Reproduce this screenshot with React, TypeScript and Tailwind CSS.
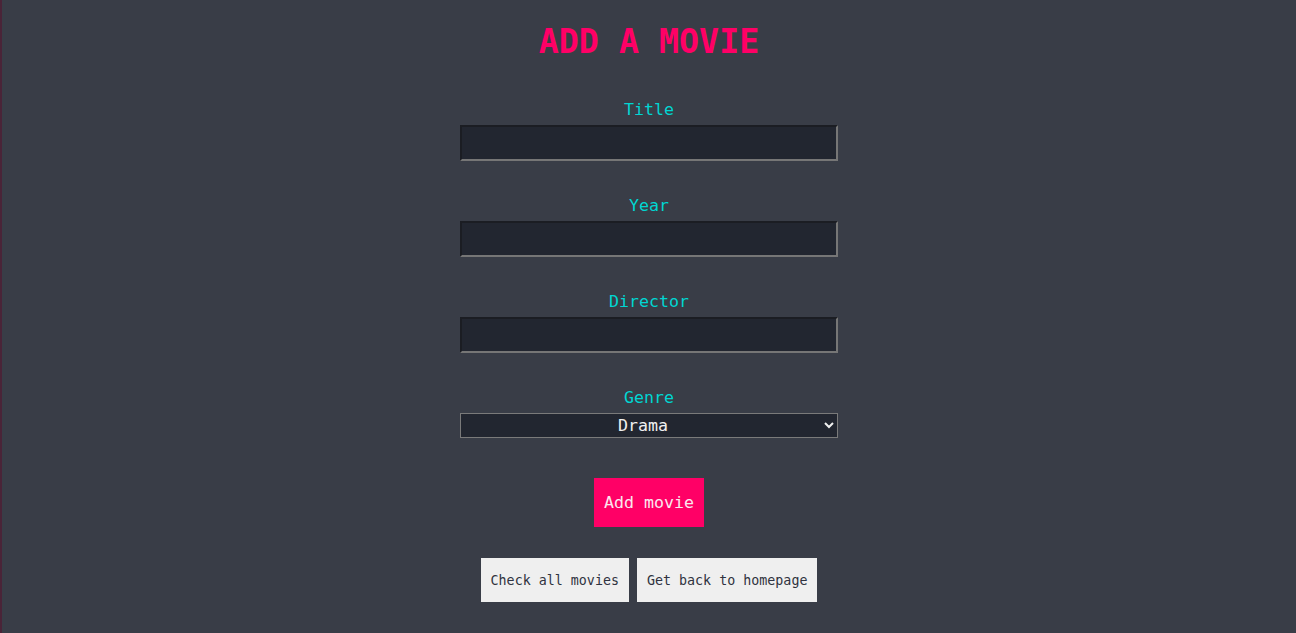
import { useState } from "react";

const mono = "font-['DejaVu_Sans_Mono',monospace]";

interface FieldProps {
  label: string;
  value: string;
  onChange: (v: string) => void;
}

function Field({ label, value, onChange }: FieldProps) {
  return (
    <div className="flex flex-col items-center">
      <label className="mt-[1px] text-[16.6px] leading-[20px] text-[#00d6d2]">{label}</label>
      <input
        value={value}
        onChange={(e) => onChange(e.target.value)}
        className="mt-[5px] h-[36px] w-[378px] border-2 border-t-[#1b1d23] border-l-[#1b1d23] border-b-[#767676] border-r-[#767676] bg-[#222630] px-2 text-[16.6px] text-white outline-none"
      />
    </div>
  );
}

export default function App() {
  const [title, setTitle] = useState("");
  const [year, setYear] = useState("");
  const [director, setDirector] = useState("");
  const [genre, setGenre] = useState("Drama");

  return (
    <div className={`min-h-[633px] border-l-2 border-[#4a2438] bg-[#393d47] ${mono} flex flex-col items-center`}>
      <h1 className="mt-[22px] text-[33.3px] leading-[40px] font-bold text-[#ff0066]">ADD A MOVIE</h1>

      <form className="mt-[37px] flex flex-col items-center gap-[34px]" onSubmit={(e) => e.preventDefault()}>
        <Field label="Title" value={title} onChange={setTitle} />
        <Field label="Year" value={year} onChange={setYear} />
        <Field label="Director" value={director} onChange={setDirector} />

        <div className="flex flex-col items-center">
          <label className="mt-[1px] text-[16.6px] leading-[20px] text-[#00d6d2]">Genre</label>
          <select
            value={genre}
            onChange={(e) => setGenre(e.target.value)}
            className="mt-[5px] h-[25px] w-[378px] border border-[#7a7a7a] bg-[#222630] text-center text-[16.6px] text-[#f0f0f0] [text-align-last:center] outline-none"
          >
            <option>Drama</option>
            <option>Comedy</option>
            <option>Action</option>
            <option>Horror</option>
            <option>Sci-fi</option>
          </select>
        </div>
      </form>

      <button className="mt-[40px] h-[49px] w-[110px] bg-[#ff0066] pt-[2px] text-[16.6px] text-[#fbe6ef]">
        Add movie
      </button>

      <div className="mt-[31px] flex gap-2">
        <button className="h-[44px] bg-[#efefef] px-[10px] pt-[2px] text-[13.33px] text-[#2f3340]">Check all movies</button>
        <button className="h-[44px] bg-[#efefef] px-[10px] pt-[2px] text-[13.33px] text-[#2f3340]">Get back to homepage</button>
      </div>
    </div>
  );
}
